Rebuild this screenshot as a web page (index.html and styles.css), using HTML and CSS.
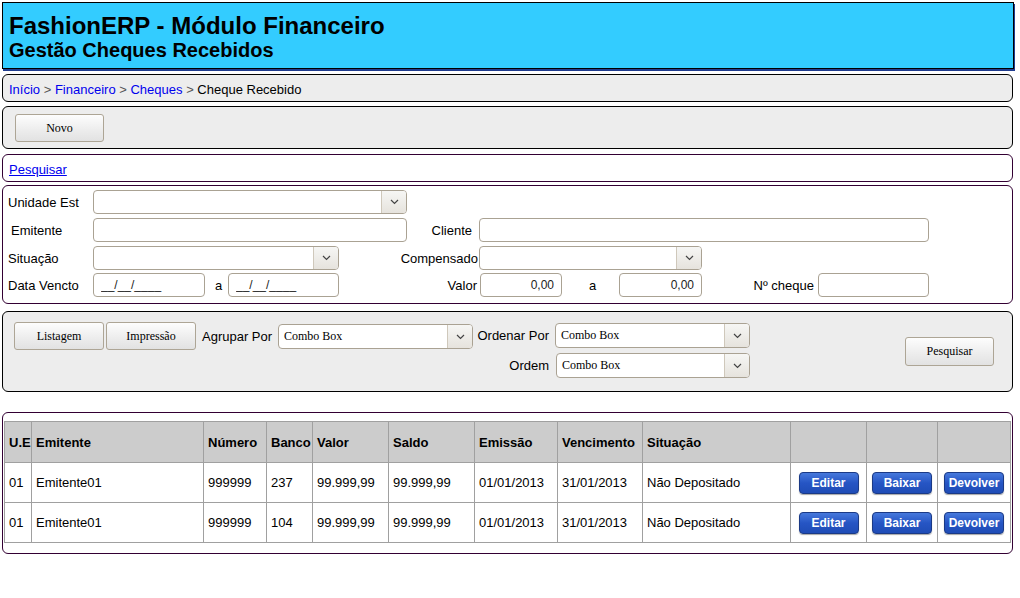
FILE: index.html
```html
<!DOCTYPE html>
<html lang="pt-BR">
<head>
<meta charset="utf-8">
<title>FashionERP - Módulo Financeiro</title>
<link rel="stylesheet" href="styles.css">
</head>
<body>
<div class="page">
  <header class="header">
    <h1 class="title">FashionERP - Módulo Financeiro</h1>
    <h2 class="subtitle">Gestão Cheques Recebidos</h2>
  </header>

  <nav class="box gray crumbs">
    <a href="#">Início</a> <span class="sep">&gt;</span> <a href="#">Financeiro</a> <span class="sep">&gt;</span> <a href="#">Cheques</a> <span class="sep">&gt;</span> Cheque Recebido
  </nav>

  <div class="box gray actions">
    <button class="btn btn-novo">Novo</button>
  </div>

  <div class="box purple linkbar">
    <a href="#" class="link">Pesquisar</a>
  </div>

  <div class="box purple filters">
    <div class="row">
      <span class="lbl">Unidade Est</span>
      <div class="combo w314"><span class="val"></span><span class="arrow"><svg width="9" height="6" viewBox="0 0 9 6"><path d="M1 1l3.5 3.5L8 1" fill="none" stroke="#444" stroke-width="1.2"/></svg></span></div>
    </div>
    <div class="row">
      <span class="lbl lbl-ind">Emitente</span>
      <input class="inp w314" type="text">
      <span class="rlbl w72">Cliente</span>
      <input class="inp w450" type="text">
    </div>
    <div class="row">
      <span class="lbl">Situação</span>
      <div class="combo w246"><span class="val"></span><span class="arrow"><svg width="9" height="6" viewBox="0 0 9 6"><path d="M1 1l3.5 3.5L8 1" fill="none" stroke="#444" stroke-width="1.2"/></svg></span></div>
      <span class="rlbl w140">Compensado</span>
      <div class="combo w223"><span class="val"></span><span class="arrow"><svg width="9" height="6" viewBox="0 0 9 6"><path d="M1 1l3.5 3.5L8 1" fill="none" stroke="#444" stroke-width="1.2"/></svg></span></div>
    </div>
    <div class="row">
      <span class="lbl">Data Vencto</span>
      <input class="inp w112 date" type="text" value="__/__/____">
      <span class="mid w23">a</span>
      <input class="inp w111 date" type="text" value="__/__/____">
      <span class="rlbl w141">Valor</span>
      <input class="inp w82 num" type="text" value="0,00">
      <span class="mid w57">a</span>
      <input class="inp w83 num" type="text" value="0,00">
      <span class="rlbl w116">Nº cheque</span>
      <input class="inp w111" type="text">
    </div>
  </div>

  <div class="box gray options">
    <div class="opt-left">
      <button class="btn btn-opt">Listagem</button>
      <button class="btn btn-opt">Impressão</button>
      <span class="opt-lbl">Agrupar Por</span>
      <div class="combo w195 cb"><span class="val">Combo Box</span><span class="arrow"><svg width="9" height="6" viewBox="0 0 9 6"><path d="M1 1l3.5 3.5L8 1" fill="none" stroke="#444" stroke-width="1.2"/></svg></span></div>
    </div>
    <div class="opt-mid">
      <div class="opt-row">
        <span class="rlbl w82b">Ordenar Por</span>
        <div class="combo w195 cb"><span class="val">Combo Box</span><span class="arrow"><svg width="9" height="6" viewBox="0 0 9 6"><path d="M1 1l3.5 3.5L8 1" fill="none" stroke="#444" stroke-width="1.2"/></svg></span></div>
      </div>
      <div class="opt-row">
        <span class="rlbl w83b">Ordem</span>
        <div class="combo w194 cb"><span class="val">Combo Box</span><span class="arrow"><svg width="9" height="6" viewBox="0 0 9 6"><path d="M1 1l3.5 3.5L8 1" fill="none" stroke="#444" stroke-width="1.2"/></svg></span></div>
      </div>
    </div>
    <button class="btn btn-search">Pesquisar</button>
  </div>

  <div class="box purple results">
    <table class="grid">
      <colgroup>
        <col class="c27"><col class="c172"><col class="c63"><col class="c46"><col class="c76"><col class="c86"><col class="c83"><col class="c85"><col class="c148"><col class="c76"><col class="c71"><col class="c73">
      </colgroup>
      <thead>
        <tr><th>U.E</th><th>Emitente</th><th>Número</th><th>Banco</th><th>Valor</th><th>Saldo</th><th>Emissão</th><th>Vencimento</th><th>Situação</th><th></th><th></th><th></th></tr>
      </thead>
      <tbody>
        <tr><td>01</td><td>Emitente01</td><td>999999</td><td>237</td><td>99.999,99</td><td>99.999,99</td><td>01/01/2013</td><td>31/01/2013</td><td>Não Depositado</td><td class="bc"><button class="bbtn">Editar</button></td><td class="bc"><button class="bbtn">Baixar</button></td><td class="bc"><button class="bbtn">Devolver</button></td></tr>
        <tr><td>01</td><td>Emitente01</td><td>999999</td><td>104</td><td>99.999,99</td><td>99.999,99</td><td>01/01/2013</td><td>31/01/2013</td><td>Não Depositado</td><td class="bc"><button class="bbtn">Editar</button></td><td class="bc"><button class="bbtn">Baixar</button></td><td class="bc"><button class="bbtn">Devolver</button></td></tr>
      </tbody>
    </table>
  </div>
</div>
</body>
</html>
```

FILE: styles.css
```css
* { box-sizing: border-box; }
html, body { margin: 0; padding: 0; background: #fff; }
body { font-family: "Liberation Sans", Arial, sans-serif; font-size: 13px; color: #000; }

.page { width: 1013px; padding: 2px 0 0 2px; }

.header {
  width: 1012px;
  height: 67px;
  background: #33ccff;
  border: 1px solid #000;
  padding: 9px 6px 0 6px;
  box-shadow: 1px 2px 0 #1f3b8e;
}
.title { margin: 0; font-size: 24px; line-height: 27px; font-weight: bold; }
.subtitle { margin: 0; font-size: 20px; line-height: 22px; font-weight: bold; }

.box { width: 1011px; border: 1px solid #000; border-radius: 6px; }
.gray { background: #ededed; }
.purple { border-color: #330033; background: #fff; }

.crumbs { margin-top: 5px; height: 28px; padding: 8px 6px 4px; line-height: 14px; }
.crumbs a { color: #0000ee; text-decoration: none; }
.crumbs .sep { color: #555; }

.actions { margin-top: 4px; height: 43px; padding: 7px 12px; }

.btn {
  font-family: "Liberation Serif", "Times New Roman", serif;
  font-size: 12px;
  color: #000;
  background: linear-gradient(#fdfdfd, #ececec 60%, #e2e2e2);
  border: 1px solid #ada595;
  border-radius: 3px;
  padding: 0;
}
.btn-novo { width: 89px; height: 28px; }

.linkbar { margin-top: 5px; height: 28px; padding: 8px 6px 4px; line-height: 14px; }
.link { color: #0000ee; text-decoration: underline; }

.filters { margin-top: 3px; height: 119px; padding: 4px 0 0 0; }
.row { display: flex; align-items: center; height: 24px; margin-bottom: 4px; }
.row:nth-child(3) { margin-bottom: 3px; }
.lbl { width: 90px; padding-left: 5px; flex: none; }
.lbl-ind { padding-left: 8px; }
.rlbl { flex: none; text-align: right; }
.mid { flex: none; }

.w23 { width: 23px; padding-left: 10px; }
.w57 { width: 57px; padding-left: 27px; }
.w72 { width: 72px; padding-right: 7px; }
.w140 { width: 140px; padding-right: 1px; }
.w141 { width: 141px; padding-right: 3px; }
.w116 { width: 116px; padding-right: 4px; }

.inp {
  height: 24px;
  border: 1px solid #aaa293;
  border-radius: 4px;
  background: #fff;
  font-family: "Liberation Sans", Arial, sans-serif;
  font-size: 12px;
  padding: 0 6px;
  flex: none;
  color: #222;
}
.inp.num { text-align: right; padding-right: 7px; }
.inp.date { padding-left: 7px; }
.w314 { width: 314px; }
.w450 { width: 450px; }
.w246 { width: 246px; }
.w223 { width: 223px; }
.w112 { width: 112px; }
.w111 { width: 111px; }
.w82 { width: 82px; }
.w83 { width: 83px; }
.w195 { width: 195px; }
.w194 { width: 194px; }

.combo {
  display: flex;
  height: 24px;
  border: 1px solid #aaa293;
  border-radius: 4px;
  background: #fff;
  overflow: hidden;
  flex: none;
}
.combo .val { flex: 1; padding-left: 5px; font-family: "Liberation Serif", "Times New Roman", serif; font-size: 12px; line-height: 22px; }
.combo .arrow {
  width: 25px;
  border-left: 1px solid #cfc8bb;
  background: linear-gradient(#f6f6f4, #e6e3dd);
  display: flex;
  align-items: center;
  justify-content: center;
}
.combo.cb { height: 25px; }
.combo.cb .val { line-height: 23px; }

.options {
  margin-top: 7px;
  height: 81px;
  display: flex;
  align-items: flex-start;
  padding: 10px 18px 0 11px;
}
.opt-left { display: flex; align-items: center; }
.btn-opt { width: 90px; height: 28px; margin-right: 2px; }
.opt-lbl { margin-left: 4px; width: 76px; }
.opt-left .combo { margin-top: 1px; }
.opt-mid { display: flex; flex-direction: column; gap: 5px; padding-top: 1px; }
.opt-row { display: flex; align-items: center; }
.w82b { width: 82px; padding-right: 6px; }
.w83b { width: 83px; padding-right: 7px; }
.btn-search { width: 89px; height: 29px; margin-left: auto; align-self: center; margin-top: -10px; }

.results { margin-top: 20px; height: 142px; padding: 8px 1px 0 1px; }
.grid { width: 1006px; border-collapse: collapse; table-layout: fixed; }
.grid th, .grid td { border: 1px solid #a0a0a0; padding: 0 4px; text-align: left; white-space: nowrap; overflow: hidden; }
.grid th { background: #cccccc; height: 41px; font-weight: bold; font-size: 13px; }
.grid td { height: 40px; font-size: 13px; }
.grid td.bc { text-align: center; padding: 0; }
.c27 { width: 27px; } .c172 { width: 172px; } .c63 { width: 63px; } .c46 { width: 46px; }
.c76 { width: 76px; } .c86 { width: 86px; } .c83 { width: 83px; } .c85 { width: 85px; }
.c148 { width: 148px; } .c71 { width: 71px; } .c73 { width: 73px; }

.bbtn {
  width: 60px;
  height: 22px;
  border: 1px solid #1b3a86;
  border-radius: 4px;
  background: linear-gradient(#4678dc, #2655c4 50%, #1f4cb6);
  color: #fff;
  font-family: "Liberation Sans", Arial, sans-serif;
  font-size: 12px;
  font-weight: bold;
  padding: 0;
  box-shadow: 0 1px 1px rgba(0,0,0,0.35);
}
```
